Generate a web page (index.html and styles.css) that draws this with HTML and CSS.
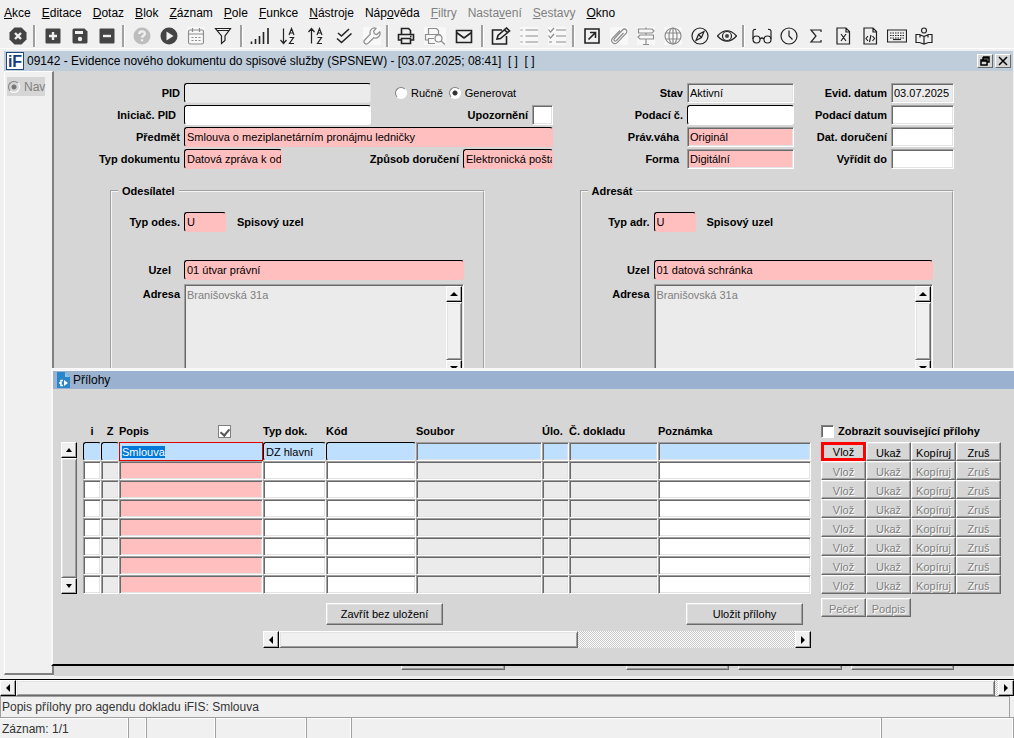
FILE: index.html
```html
<!DOCTYPE html>
<html lang="cs">
<head>
<meta charset="utf-8">
<title>iFIS</title>
<link rel="stylesheet" href="styles.css">
</head>
<body>
<nav class="menubar">
  <button><u>A</u>kce</button><button><u>E</u>ditace</button><button><u>D</u>otaz</button><button><u>B</u>lok</button><button><u>Z</u>áznam</button><button><u>P</u>ole</button><button><u>F</u>unkce</button><button><u>N</u>ástroje</button><button>Náp<u>o</u>věda</button><button disabled><u>F</u>iltry</button><button disabled>Nasta<u>v</u>ení</button><button disabled><u>S</u>estavy</button><button><u>O</u>kno</button>
</nav>
<div class="toolbar">
  <div class="group">
    <button><svg viewBox="0 0 18 18"><path class="fill" d="M5.5.5h7l5 5v7l-5 5h-7l-5-5v-7z"/><path class="cut" d="M6 6l6 6M12 6l-6 6"/></svg></button>
  </div>
  <div class="group">
    <button><svg viewBox="0 0 18 18"><rect class="fill" x="1.500" y="1.500" width="15" height="15" rx="1"/><path class="cut" d="M9 5v8M5 9h8"/></svg></button>
    <button><svg viewBox="0 0 18 18"><path class="fill" d="M1.500 3q0-1.500 1.500-1.500h10.500l3 3V15q0 1.500-1.500 1.500H3q-1.500 0-1.500-1.500z"/><path class="hole" d="M4 4h8v3H4z"/><circle class="hole" cx="9" cy="12" r="2.200"/></svg></button>
    <button><svg viewBox="0 0 18 18"><rect class="fill" x="1.500" y="1.500" width="15" height="15" rx="1"/><path class="cut" d="M5 9h8"/></svg></button>
  </div>
  <div class="group">
    <button class="pale"><svg viewBox="0 0 18 18"><circle class="fill" cx="9" cy="9" r="8.500"/><path class="cut" d="M6.300 7c0-3.500 5.500-3.500 5.500-.3 0 2-2.800 2-2.800 4M9 12.300v2"/></svg></button>
    <button><svg viewBox="0 0 18 18"><circle class="fill" cx="9" cy="9" r="8.500"/><path class="hole" d="M6.500 4.500l7 4.500-7 4.500z"/></svg></button>
    <button disabled><svg viewBox="0 0 18 18"><rect x="1.500" y="3" width="15" height="14" rx="1.500"/><path d="M1.500 7h15M5.500 1v4M12.500 1v4"/><path stroke-dasharray="2 1.500" d="M4.500 10.500h9M4.500 13.500h9"/></svg></button>
    <button><svg viewBox="0 0 18 18"><path d="M1.500 1.500h15L11 9v4.500l-3.500 3V9zM3.500 3.500h11"/></svg></button>
  </div>
  <div class="group mid">
    <button><svg viewBox="0 0 20 18"><path class="thick" d="M1.500 14.500V17M5.500 12v5M9.500 9v8M13.500 5v12M18 1v16"/></svg></button>
    <button><svg viewBox="0 0 18 18"><path d="M4.500 1.500V16M1.500 13l3 3.500 3-3.500M10 8l2.500-6.500L15 8M11 6h3M10.500 10.500h4l-4 6h4.500"/></svg></button>
    <button><svg viewBox="0 0 18 18"><path d="M4.500 2v14.500M1.500 5l3-3.500 3 3.500M10 8l2.500-6.500L15 8M11 6h3M10.500 10.500h4l-4 6h4.500"/></svg></button>
    <button><svg viewBox="0 0 18 18"><path class="thick" d="M3 6l3.500 3L14 2M2 11.500L6.500 15.500 16.500 6.500"/></svg></button>
    <button disabled><svg viewBox="0 0 18 18"><path d="M13 1.200a4.600 4.600 0 0 0-5.700 6L1.700 13a2 2 0 0 0 3.300 3.300l5.800-5.600a4.600 4.600 0 0 0 6-5.800l-3 2.600-2.400-.7-.8-2.500z"/></svg></button>
  </div>
  <div class="group wide">
    <button><svg viewBox="0 0 18 18"><path class="thick" d="M4.500 7V1.500h7l2 2V7M4 13H1.500V7.500h15V13H14M4.500 11.500h9v5h-9zM13 9.500h1.500"/></svg></button>
    <button disabled><svg viewBox="0 0 22 18"><path d="M4.500 7V1.500h8l2 2V7M4.500 13h-3V7.500h15M4.500 11.500H10M4.500 11v5.500H11"/><circle cx="14.500" cy="11.500" r="3.500"/><path d="M17 14l4 3.500"/></svg></button>
    <button><svg viewBox="0 0 18 18"><path class="thick" d="M1.500 3.500h15v12h-15zM1.500 5.500L9 11l7.500-5.500"/></svg></button>
  </div>
  <div class="group mid">
    <button><svg viewBox="0 0 20 18"><path class="thick" d="M11 3H1.500v14h14V9M6 12l1-3.500L15.500 1 18.500 4 9.500 11.500zM13.500 3l3 2.700"/></svg></button>
    <button disabled><svg viewBox="0 0 18 18"><path d="M5.500 3H18M5.500 9H18M5.500 15H18M.5 3h2M.5 9h2M.5 15h2"/></svg></button>
    <button disabled><svg viewBox="0 0 18 18"><path d="M8 3h10M8 9h10M8 15h10M.5 2.500L2.500 5l3.500-4M.5 8.500l2 2.500L6 7M1 15h3"/></svg></button>
  </div>
  <div class="group">
    <button><svg viewBox="0 0 18 18"><path class="thick" d="M2 2h14v14H2zM5.500 12.500l6.500-6.500M7 5.500h5.500V11"/></svg></button>
    <button disabled><svg viewBox="0 0 18 18"><path d="M13.500 6l-7 7.500c-1.500 1.500-3.500-.5-2-2l8-8.500c2.500-2.500 6 .8 3.500 3.300l-8.500 9c-3.500 3.500-8-1-4.700-4.500L10 3.500"/></svg></button>
    <button disabled><svg viewBox="0 0 18 18"><path d="M9 .5V2M9 6v2M9 12v5.500M6 17.500h6M1.500 2H15l2 2-2 2H1.500zM16.500 8H3l-2 2 2 2h13.500z"/></svg></button>
    <button disabled><svg viewBox="0 0 18 18"><circle cx="9" cy="9" r="8"/><ellipse cx="9" cy="9" rx="4" ry="8"/><path d="M9 1v16M1.500 6h15M1.500 12h15"/></svg></button>
    <button><svg viewBox="0 0 18 18"><circle cx="9" cy="9" r="8"/><path d="M13 4.500L10.500 10.500 5 13.500 7.500 7.500zM7.500 7.500l3 3"/></svg></button>
    <button><svg viewBox="0 0 20 18"><path d="M.5 9Q10-1.500 19.500 9 10 19.500.5 9z"/><circle cx="10" cy="9" r="4.500"/><circle class="fill" cx="10" cy="9" r="2"/></svg></button>
  </div>
  <div class="group">
    <button><svg viewBox="0 0 20 18"><circle cx="4.500" cy="12.500" r="3.500"/><circle cx="15.500" cy="12.500" r="3.500"/><path d="M8 12q2-2 4 0M1 12V4.500Q1 2 4 2.500M19 12V4.500Q19 2 16 2.500"/></svg></button>
    <button><svg viewBox="0 0 18 18"><circle cx="9" cy="9" r="8"/><path d="M9 3.500V9l3.500 3.500"/></svg></button>
    <button><svg viewBox="0 0 18 18"><path d="M14 5V3H4l5 6-5 6h10v-2"/></svg></button>
    <button><svg viewBox="0 0 18 18"><path d="M3 1h9l3.500 3.500V17H3zM12 1v4h3.500M7 7l5 7M12 7l-5 7"/></svg></button>
    <button><svg viewBox="0 0 18 18"><path d="M3 1h9l3.500 3.500V17H3zM12 1v4h3.500M7 9l-2 2.500L7 14M11.500 9l2 2.500-2 2.500M10 8l-1.500 7"/></svg></button>
    <button><svg viewBox="0 0 20 18"><path d="M.5 3h19v12H.5z"/><path stroke-dasharray="1.500 1" d="M3 6h14M3 8.500h14M3 11h14"/><path d="M6 12.500h8"/></svg></button>
    <button><svg viewBox="0 0 18 18"><circle cx="9" cy="3.500" r="2.500"/><path d="M9 9.500L4.500 7.500H1v8h3.500L9 17l4.500-1.500H17v-8h-3.500zM9 9.500V17M5 7.500v3M13 7.500v3"/></svg></button>
  </div>
</div>

<main class="window">
  <header class="titlebar">
    <span class="logo">iF</span>
    <h1>09142 - Evidence nového dokumentu do spisové služby (SPSNEW) - [03.07.2025; 08:41]&nbsp; [ ]&nbsp; [ ]</h1>
    <button class="winbtn"><svg viewBox="0 0 10 10"><path d="M3 1h6v5H7M3 1v3M3 2h6M1 4h6v5H1zM1 5h6"/></svg></button>
    <button class="winbtn"><svg viewBox="0 0 10 10"><path d="M1 1l8 8M9 1L1 9"/></svg></button>
  </header>
  <div class="work">
    <aside class="side"><label class="navopt"><input type="radio" checked disabled>Nav</label></aside>
    <form class="form" onsubmit="return false">
      <div class="head">
        <div class="col">
          <div class="row"><label class="w126" for="pid">PID</label><input id="pid" class="soft grey w187" readonly>
            <label class="opt first"><input type="radio" name="gen">Ručně</label><label class="opt"><input type="radio" name="gen" checked>Generovat</label></div>
          <div class="row"><label class="w126 in" for="ipid">Iniciač. PID</label><input id="ipid" class="soft w187">
            <label class="push" for="upo">Upozornění</label><input id="upo" class="sunk w21"></div>
          <div class="row"><label class="w126" for="pred">Předmět</label><input id="pred" class="soft pink grow" value="Smlouva o meziplanetárním pronájmu ledničky"></div>
          <div class="row"><label class="w126" for="typ">Typ dokumentu</label><input id="typ" class="soft pink w98" value="Datová zpráva k odeslání">
            <label class="push" for="zpu">Způsob doručení</label><input id="zpu" class="soft pink w90" value="Elektronická pošta"></div>
        </div>
        <div class="col">
          <div class="row"><label class="grow" for="stav">Stav</label><input id="stav" class="sunk grey w107" readonly value="Aktivní"></div>
          <div class="row"><label class="grow" for="pc">Podací č.</label><input id="pc" class="soft w107"></div>
          <div class="row"><label class="grow in" for="pv">Práv.váha</label><input id="pv" class="sunk pink w107" value="Originál"></div>
          <div class="row"><label class="grow in" for="forma">Forma</label><input id="forma" class="sunk pink w107" value="Digitální"></div>
        </div>
        <div class="col">
          <div class="row"><label class="grow" for="ed">Evid. datum</label><input id="ed" class="sunk grey w63" readonly value="03.07.2025"></div>
          <div class="row"><label class="grow" for="pd">Podací datum</label><input id="pd" class="sunk w63"></div>
          <div class="row"><label class="grow" for="dd">Dat. doručení</label><input id="dd" class="sunk w63"></div>
          <div class="row"><label class="grow" for="vd">Vyřídit do</label><input id="vd" class="sunk w63"></div>
        </div>
      </div>
      <div class="parties">
        <fieldset>
          <legend>Odesílatel</legend>
          <div class="row kind"><label class="w68" for="to">Typ odes.</label><input id="to" class="soft pink w42" value="U"><b>Spisový uzel</b></div>
          <div class="row"><label class="w68 out" for="uo">Uzel</label><input id="uo" class="soft pink grow" value="01 útvar právní"></div>
          <div class="addr"><label class="w68" for="ao">Adresa</label>
            <div class="area sunk"><textarea id="ao" readonly>Branišovská 31a</textarea><div class="vscroll"><button type="button" class="arrow up"></button><i class="thumb"></i><button type="button" class="arrow down"></button></div></div></div>
        </fieldset>
        <fieldset>
          <legend>Adresát</legend>
          <div class="row kind"><label class="w68" for="ta">Typ adr.</label><input id="ta" class="soft pink w42" value="U"><b>Spisový uzel</b></div>
          <div class="row"><label class="w68" for="ua">Uzel</label><input id="ua" class="soft pink grow" value="01 datová schránka"></div>
          <div class="addr"><label class="w68" for="aa">Adresa</label>
            <div class="area sunk"><textarea id="aa" readonly>Branišovská 31a</textarea><div class="vscroll"><button type="button" class="arrow up"></button><i class="thumb"></i><button type="button" class="arrow down"></button></div></div></div>
        </fieldset>
      </div>
      <div class="under"><button class="btn"></button><button class="btn far"></button><button class="btn"></button><button class="btn"></button></div>
    </form>
  </div>

  <section class="dialog">
    <header class="dlgtitle">
      <svg viewBox="0 0 13 16"><path fill="#2a86c8" d="M0 0h8l5 5v11H0z"/><path fill="#8ec6ea" d="M8 0v5h5z"/><path fill="none" stroke="#fff" stroke-width="1.500" d="M6 8.500H4v5h2M2 11h2"/><path fill="#fff" d="M7 8l4 3-4 3z"/></svg>
      <h2>Přílohy</h2>
    </header>
    <div class="grid">
      <div class="vscroll rows-scroll"><button class="arrow up"></button><i class="thumb"></i><button class="arrow down"></button></div>
      <table>
        <colgroup><col class="c18"><col class="c18"><col class="c144"><col class="c63"><col class="c90"><col class="c126"><col class="c27"><col class="c89"><col><col class="c10"><col class="c45"><col class="c45"><col class="c45"><col class="c45"></colgroup>
        <thead><tr><th class="mid">i</th><th class="mid">Z</th><th><div class="split"><label for="all">Popis</label><input type="checkbox" id="all" class="tick" checked></div></th><th>Typ dok.</th><th>Kód</th><th>Soubor</th><th>Úlo.</th><th>Č. dokladu</th><th>Poznámka</th><th></th><th colspan="4"><label class="related"><input type="checkbox" class="tick">Zobrazit související přílohy</label></th></tr></thead>
        <tbody id="rows">
          <tr class="current"><td><input class="soft"></td><td><input class="soft"></td><td><input class="active" id="popis" value="Smlouva"></td><td><input class="soft" value="DZ hlavní"></td><td><input class="soft"></td><td><input class="sunk"></td><td><input class="sunk"></td><td><input class="sunk"></td><td><input class="sunk"></td><td></td><td><button class="btn marked">Vlož</button></td><td><button class="btn">Ukaž</button></td><td><button class="btn">Kopíruj</button></td><td><button class="btn">Zruš</button></td></tr>
        </tbody>
      </table>
    </div>
    <template id="blank"><tr><td><input class="sunk"></td><td><input class="sunk grey"></td><td><input class="sunk pink"></td><td><input class="sunk"></td><td><input class="sunk"></td><td><input class="sunk grey"></td><td><input class="sunk grey"></td><td><input class="sunk grey"></td><td><input class="sunk"></td><td></td><td><button class="btn" disabled>Vlož</button></td><td><button class="btn" disabled>Ukaž</button></td><td><button class="btn" disabled>Kopíruj</button></td><td><button class="btn" disabled>Zruš</button></td></tr></template>
    <div class="actions">
      <button class="btn big">Zavřít bez uložení</button>
      <button class="btn big save">Uložit přílohy</button>
      <button class="btn small" disabled>Pečeť</button><button class="btn small" disabled>Podpis</button>
    </div>
    <div class="hscroll inner"><button class="arrow left"></button><i class="thumb"></i><button class="arrow right"></button></div>
  </section>
</main>
<div class="hscroll page"><button class="arrow left"></button><i class="thumb"></i><button class="arrow right"></button></div>
<div class="hint"><span>Popis přílohy pro agendu dokladu iFIS: Smlouva</span></div>
<footer class="status"><span class="s1">Záznam: 1/1</span><span class="s2"></span><span class="s3"></span><span class="s4"></span><span class="s5"></span><span class="s6"></span><span class="s7"></span></footer>
<script src="app.js"></script>
</body>
</html>
```
FILE: styles.css
```css
* { box-sizing: border-box; }
html, body { margin: 0; }
body {
  min-height: 100vh; display: flex; flex-direction: column;
  background: #f0f0f0; color: #000; overflow: hidden;
  font: 12px/14px "Liberation Sans", Arial, sans-serif;
}
button, input, textarea { font: inherit; color: inherit; margin: 0; padding: 0; border: 0; border-radius: 0; background: none; min-width: 0; outline: 0; }
h1, h2 { margin: 0; font-size: 12px; font-weight: normal; white-space: nowrap; }

.menubar { display: flex; gap: 11px; height: 24px; padding: 2px 4px 0; align-items: center; }
.menubar button:disabled { color: #808080; }
.toolbar { display: flex; height: 24px; padding-left: 6px; align-items: center; }
.group { display: flex; gap: 3px; align-items: center; }
.group.mid { gap: 4px; }
.group.wide { gap: 5px; }
.group + .group::before { content: ""; width: 2px; height: 22px; margin: 0 2px 0 3px; background: #a0a0a0; border-right: 1px solid #fff; }
.group + .mid::before { margin: 0 1px 0 5px; }
.group + .wide::before { margin: 0 0 0 2px; }
.toolbar button { width: 24px; height: 20px; display: grid; place-items: center; }
.toolbar svg { height: 18px; fill: none; stroke: #222; stroke-width: 1.2; }
.toolbar .thick { stroke-width: 1.6; }
.toolbar .fill { fill: #444; stroke: none; }
.toolbar .hole { fill: #f0f0f0; stroke: none; }
.toolbar .cut { stroke: #f0f0f0; stroke-width: 2.4; }
.toolbar .pale .fill { fill: #bdbdbd; }
.toolbar button:disabled svg { stroke: #8c8c8c; background: #f8f8f8; }

.window { position: relative; flex: 1; display: flex; flex-direction: column; border-top: 1px solid #fff; padding: 2px 1px 3px 4px; overflow: hidden; }
.titlebar { display: flex; align-items: center; height: 20px; background: #bfcddb; padding: 0 2px; }
.logo { width: 18px; height: 18px; margin-right: 3px; border: 1px solid #1e477f; background: #fff; color: #153e7a; font: bold 16px/17px "Liberation Sans", Arial, sans-serif; text-align: center; }
.titlebar h1 { flex: 1; }
.winbtn { width: 16px; height: 14px; margin-left: 2px; display: grid; place-items: center; background: #d6d6d6; border: 1px solid; border-color: #fff #696969 #696969 #fff; }
.winbtn svg { width: 10px; height: 10px; fill: none; stroke: #000; stroke-width: 1.5; }
.work { flex: 1; display: flex; min-height: 0; }
.side { flex: none; width: 50px; margin-bottom: 1px; padding: 5px 2px; border: solid; border-width: 1px 2px 2px 1px; border-color: #fff #808080 #808080 #fff; }
.navopt { display: flex; align-items: center; gap: 4px; width: 38px; height: 19px; padding-left: 1px; background: #d6d6d6; color: #808080; }
.form { flex: 1; min-width: 0; display: flex; flex-direction: column; background: #d6d6d6; padding: 12px 59px 6px 0; font-size: 11px; }

input[type="radio"] { appearance: none; width: 12px; height: 12px; border-radius: 50%; border: 1px solid; border-color: #808080 #fff #fff #808080; background: #fff; flex: none; }
input[type="radio"]:checked { background: radial-gradient(circle, #333 0 2px, #fff 3px); }
input[type="radio"]:disabled { background: radial-gradient(circle, #777 0 2px, #d6d6d6 3px); }
.tick { appearance: none; width: 13px; height: 13px; flex: none; background: #fff; border: 1px solid; border-color: #808080 #fff #fff #808080; box-shadow: inset 1px 1px #696969; }
.tick:checked { display: grid; place-items: center; border-color: #808080; box-shadow: none; }
.tick:checked::before { content: ""; width: 4px; height: 7px; border: solid #555; border-width: 0 2px 2px 0; rotate: 40deg; }

.head { display: grid; grid-template-columns: minmax(0, 499fr) minmax(0, 241fr) minmax(0, 160fr); }
.col { display: grid; gap: 2px; }
.row { display: flex; align-items: center; gap: 4px; height: 20px; }
.row > label, .addr > label { font-weight: bold; text-align: right; white-space: nowrap; }
.row > .opt { display: flex; align-items: center; gap: 4px; font-weight: normal; }
.opt.first { margin-left: 20px; margin-right: 2px; }
.push { margin-left: auto; }
.grow { flex: 1; }
.row .in { padding-right: 4px; }
.row .out { padding-right: 9px; }
.w126 { width: 126px; flex: none; }
.w187 { width: 187px; }
.w107 { width: 107px; }
.w98 { width: 98px; }
.w90 { width: 90px; flex: none; }
.w68 { width: 68px; flex: none; }
.w63 { width: 63px; }
.w42 { width: 42px; }
.w21 { width: 21px; }
.soft, .sunk { height: 20px; padding: 0 0 0 2px; background: #fff; }
.soft { border: 1px solid; border-color: #000 #fff #fff #000; border-radius: 3px; }
.sunk { border: 1px solid; border-color: #a0a0a0 #fff #fff #a0a0a0; box-shadow: inset 1px 1px #696969, inset -1px -1px #e3e3e3; }
.grey { background: #ebebeb; }
.soft.grey { border-color: #000 #e3e3e3 #e3e3e3 #000; }
.pink { background: #ffbfbf; }
.soft.pink { border-color: #000 #ffbfbf #ffbfbf #000; }

.parties { display: grid; grid-template-columns: minmax(0, 1fr) minmax(0, 1fr); gap: 95px; margin-top: 15px; padding-left: 56px; }
fieldset { min-width: 0; margin: 0; padding: 14px 19px 40px 0; border: 2px groove #f4f4f4; }
legend { margin-left: 6px; padding: 0 4px; font-weight: bold; }
.kind { margin-bottom: 28px; }
.kind b { margin-left: 7px; }
.addr { display: flex; gap: 4px; margin-top: 4px; }
.addr > label { padding-top: 3px; }
.area { flex: 1; display: flex; height: 94px; padding: 1px; background: #ebebeb; }
.area textarea { flex: 1; padding: 2px 1px; color: #808080; resize: none; overflow: hidden; line-height: 14px; }
.under { display: flex; gap: 9px; margin-top: auto; padding-left: 347px; }
.under .btn { width: 104px; height: 20px; }
.under .far { margin-left: 112px; }

.arrow { flex: none; width: 16px; height: 16px; display: grid; place-items: center; background: #f0f0f0; border: 1px solid; border-color: #fff #000 #000 #fff; box-shadow: inset -1px -1px #a0a0a0; }
.arrow::before { content: ""; border: 4px solid transparent; }
.up::before { border-top: 0; border-bottom-color: #000; }
.down::before { border-bottom: 0; border-top-color: #000; }
.left::before { border-left: 0; border-right-color: #000; }
.right::before { border-right: 0; border-left-color: #000; }
.rows-scroll .arrow::before { border-left-width: 3px; border-right-width: 3px; }
.vscroll { flex: none; width: 16px; display: flex; flex-direction: column; }
.thumb { flex: 1; background: #f0f0f0; border: 1px solid; border-color: #fff #696969 #696969 #fff; box-shadow: inset 1px 1px #e3e3e3, inset -1px -1px #a0a0a0; }
.hscroll { display: flex; height: 17px; background: conic-gradient(#fff 25%, #c8c8c8 0 50%, #fff 0 75%, #c8c8c8 0) 0 0 / 2px 2px; }
.hscroll .arrow { height: 100%; }

.dialog { position: absolute; left: 51px; right: 0; top: 319px; background: #d6d6d6; border: solid #f8f8f8; border-width: 3px 0 0 2px; border-bottom: 2px solid #000; font-size: 11px; }
.dlgtitle { display: flex; align-items: center; gap: 3px; height: 18px; padding-left: 4px; background: #9ab2d0; }
.dlgtitle svg { width: 13px; height: 16px; }
.grid { display: flex; gap: 6px; padding: 31px 13px 0 8px; align-items: flex-end; }
.rows-scroll { height: 152px; }
.rows-scroll .thumb { background: #d6d6d6; }
table { flex: 1; width: 100%; table-layout: fixed; border-collapse: separate; border-spacing: 0; }
th { height: 22px; padding: 0; text-align: left; white-space: nowrap; vertical-align: middle; }
th.mid { text-align: center; }
.split { display: flex; justify-content: space-between; align-items: center; padding-right: 32px; }
.related { display: flex; align-items: center; gap: 4px; }
td { padding: 0; height: 19px; }
tbody td input { display: block; width: 100%; }
tbody .soft, tbody .sunk, tbody .active { height: 19px; }
tbody .btn { display: block; width: 100%; height: 19px; padding-top: 2px; }
.c10 { width: 10px; }
.c18 { width: 18px; }
.c27 { width: 27px; }
.c45 { width: 45px; }
.c63 { width: 63px; }
.c89 { width: 89px; }
.c90 { width: 90px; }
.c126 { width: 126px; }
.c144 { width: 144px; }
.current input { background: #bfdfff; }
.current .soft { border-right-color: #e3e3e3; border-bottom-color: #fff; }
.current .active { border: 1px solid #e00000; padding: 0 2px; }
.active::selection { background: #0078d7; color: #fff; }
.btn { background: #d6d6d6; border: 1px solid; border-color: #fff #696969 #696969 #fff; box-shadow: inset -1px -1px #a0a0a0, inset 1px 1px #e3e3e3; white-space: nowrap; text-align: center; }
.btn:disabled { color: #808080; text-shadow: 1px 1px #fff; }
tbody .marked { border: 3px solid #f00; box-shadow: none; padding-top: 1px; line-height: 12px; }
.actions { display: flex; align-items: flex-start; padding: 4px 103px 0 273px; }
.actions .big { width: 117px; height: 22px; margin-top: 5px; }
.actions .save { margin-left: auto; margin-right: 18px; }
.actions .small { width: 45px; height: 19px; padding-top: 2px; }
.inner { margin: 6px 203px 16px 210px; }
.inner .thumb { flex: 0 1 299px; }
.inner .right { margin-left: auto; }

.page { border-top: 1px solid #000; }
.page .thumb { margin-right: 3px; }
.hint { height: 21px; margin-right: 4px; padding: 3px 1px 0; border-top: 1px solid #a0a0a0; border-left: 1px solid #a0a0a0; border-right: 1px solid #a0a0a0; color: #333; }
.status { display: flex; height: 21px; border-top: 1px solid #a0a0a0; color: #333; box-shadow: inset 0 1px #fff; }
.status span { padding: 4px 2px 0; border-right: 1px solid #a0a0a0; box-shadow: inset -1px 0 #fff; }
.s1 { width: 129px; }
.s2 { width: 18px; }
.s3 { width: 69px; }
.s4 { width: 91px; }
.s5 { width: 45px; }
.s6 { flex: 1; }
.s7 { width: 132px; }
```
FILE: app.js
```javascript
const rows = document.getElementById("rows");
const blank = document.getElementById("blank");
for (let i = 0; i < 7; i++) rows.append(blank.content.cloneNode(true));
const popis = document.getElementById("popis");
popis.focus();
popis.select();
```
